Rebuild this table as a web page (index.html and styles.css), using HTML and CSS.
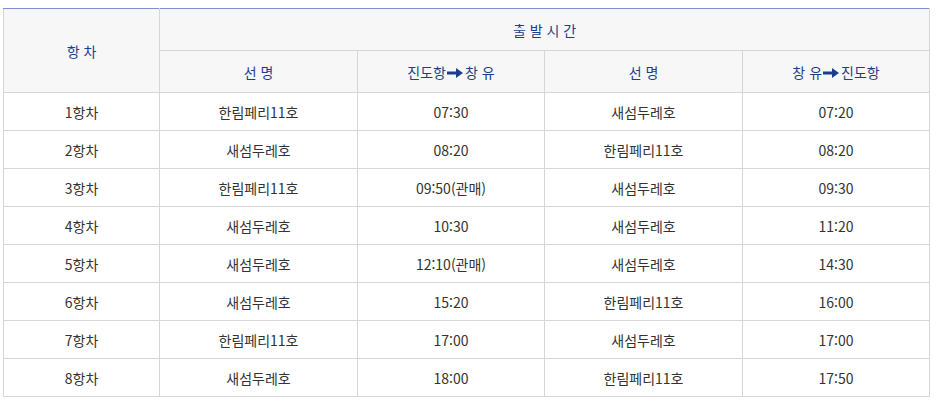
FILE: index.html
```html
<!DOCTYPE html>
<html lang="ko">
<head>
<meta charset="utf-8">
<link rel="stylesheet" href="styles.css">
</head>
<body>
<div class="wrap">
<table class="tbl">
  <colgroup>
    <col class="c1"><col class="c2"><col class="c3"><col class="c4"><col class="c5">
  </colgroup>
  <thead>
    <tr class="h1">
      <th rowspan="2">항 차</th>
      <th colspan="4">출 발 시 간</th>
    </tr>
    <tr class="h2">
      <th>선 명</th>
      <th>진도항<svg class="arr" viewBox="0 0 16 12" width="16" height="12"><path d="M0 4.5h9V1l7 5-7 5V7.5H0z" fill="#1c3f8c"/></svg>창 유</th>
      <th>선 명</th>
      <th>창 유<svg class="arr" viewBox="0 0 16 12" width="16" height="12"><path d="M0 4.5h9V1l7 5-7 5V7.5H0z" fill="#1c3f8c"/></svg>진도항</th>
    </tr>
  </thead>
  <tbody>
    <tr><td>1항차</td><td>한림페리11호</td><td>07:30</td><td>새섬두레호</td><td>07:20</td></tr>
    <tr><td>2항차</td><td>새섬두레호</td><td>08:20</td><td>한림페리11호</td><td>08:20</td></tr>
    <tr><td>3항차</td><td>한림페리11호</td><td>09:50(관매)</td><td>새섬두레호</td><td>09:30</td></tr>
    <tr><td>4항차</td><td>새섬두레호</td><td>10:30</td><td>새섬두레호</td><td>11:20</td></tr>
    <tr><td>5항차</td><td>새섬두레호</td><td>12:10(관매)</td><td>새섬두레호</td><td>14:30</td></tr>
    <tr><td>6항차</td><td>새섬두레호</td><td>15:20</td><td>한림페리11호</td><td>16:00</td></tr>
    <tr><td>7항차</td><td>한림페리11호</td><td>17:00</td><td>새섬두레호</td><td>17:00</td></tr>
    <tr><td>8항차</td><td>새섬두레호</td><td>18:00</td><td>한림페리11호</td><td>17:50</td></tr>
  </tbody>
</table>
</div>
</body>
</html>
```
FILE: styles.css
```css
html, body {
  margin: 0;
  padding: 0;
  background: #fff;
}
.wrap {
  padding: 8px 9px 0 3px;
}
.tbl {
  width: 926px;
  border-collapse: collapse;
  table-layout: fixed;
  font-family: "Noto Sans CJK KR", "Noto Sans", sans-serif;
  font-size: 14px;
  border-top: 1px solid #7b8fd2;
}
.c1 { width: 156px; }
.c2 { width: 198px; }
.c3 { width: 187px; }
.c4 { width: 198px; }
.c5 { width: 187px; }
.tbl th, .tbl td {
  border: 1px solid #d6d6d6;
  text-align: center;
  padding: 0;
  line-height: 20px;
}
.tbl thead tr:first-child th {
  border-top: 1px solid #7b8fd2;
}
.tbl th {
  background: #f7f7f7;
  color: #1c3f8c;
  font-weight: normal;
}
.h1 th { height: 41px; }
.h2 th { height: 41px; }
.tbl td {
  color: #333;
  height: 37px;
}
.arr {
  vertical-align: -1px;
  margin: 0 2px 0 1px;
}
```
